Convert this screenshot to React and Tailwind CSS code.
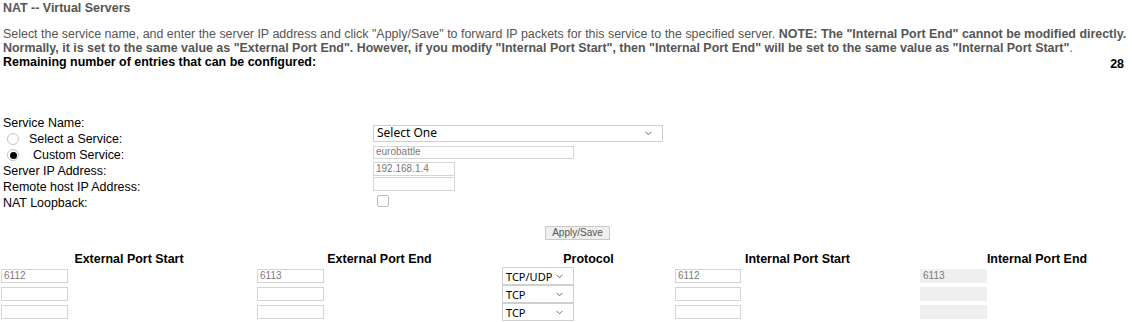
import React from 'react';

const portRows = [
  { extStart: '6112', extEnd: '6113', proto: 'TCP/UDP', intStart: '6112', intEnd: '6113' },
  { extStart: '', extEnd: '', proto: 'TCP', intStart: '', intEnd: '' },
  { extStart: '', extEnd: '', proto: 'TCP', intStart: '', intEnd: '' },
];

function Chevron() {
  return (
    <svg width="7" height="5" viewBox="0 0 7 5" className="shrink-0">
      <polyline points="0.5,0.8 3.5,3.8 6.5,0.8" fill="none" stroke="#6b6b6b" strokeWidth="1" />
    </svg>
  );
}

function FakeSelect({ value, className }) {
  return (
    <div className={`flex items-center justify-between border border-[#cfcfcf] bg-white pl-[3px] pr-[10px] font-['Noto_Sans',sans-serif] leading-none text-black ${className}`}>
      <span>{value}</span>
      <Chevron />
    </div>
  );
}

function TextBox({ value, className, disabled }) {
  return (
    <div
      className={`flex items-center px-[2px] text-[10px] leading-none text-[#7a7a7a] ${
        disabled ? 'bg-[#efefef] border border-[#efefef]' : 'bg-white border border-[#d4d4d4]'
      } ${className}`}
    >
      {value}
    </div>
  );
}

function Radio({ checked }) {
  return (
    <span className="flex h-[12px] w-[12px] items-center justify-center rounded-full border border-[#c4c4c4] bg-white">
      {checked && <span className="h-[7px] w-[7px] rounded-full bg-black" />}
    </span>
  );
}

export default function App() {
  return (
    <div className="w-full h-[322px] overflow-hidden bg-white font-['Liberation_Sans',Arial,sans-serif] text-[12.45px] leading-[14px]">
      <div className="pl-[3px] pt-[1px]">
        {/* タイトル */}
        <div className="font-bold text-[#555]">NAT -- Virtual Servers</div>

        {/* 説明 */}
        <div className="mt-[12px] text-[#555] whitespace-nowrap">
          Select the service name, and enter the server IP address and click "Apply/Save" to forward IP packets for this service to the specified server.{' '}
          <b>NOTE: The "Internal Port End" cannot be modified directly.</b>
          <br />
          <b>
            Normally, it is set to the same value as "External Port End". However, if you modify "Internal Port Start", then "Internal Port End" will be set to the same value as "Internal Port Start"
          </b>
          .
        </div>
        <div className="flex justify-between pr-[8px] font-bold text-black">
          <span>Remaining number of entries that can be configured:</span>
          <span className="pt-[2px]">28</span>
        </div>

        {/* フォーム */}
        <div className="mt-[44px] text-black">
          <div className="flex h-4 items-center">Service Name:</div>
          <div className="flex h-4 items-center">
            <div className="flex w-[370px] items-center">
              <span className="ml-[4px]"><Radio /></span>
              <span className="ml-[10px]">Select a Service:</span>
            </div>
            <FakeSelect value="Select One" className="h-[17px] w-[290px] -mt-[12px] text-[12px]" />
          </div>
          <div className="flex h-4 items-center">
            <div className="flex w-[370px] items-center">
              <span className="ml-[4px]"><Radio checked /></span>
              <span className="ml-[14px]">Custom Service:</span>
            </div>
            <TextBox value="eurobattle" className="h-[13px] w-[201px] -mt-[6px]" />
          </div>
          <div className="flex h-4 items-center">
            <div className="w-[370px]">Server IP Address:</div>
            <TextBox value="192.168.1.4" className="h-[14px] w-[82px] -mt-[5px]" />
          </div>
          <div className="flex h-4 items-center">
            <div className="w-[370px]">Remote host IP Address:</div>
            <TextBox value="" className="h-[14px] w-[82px] -mt-[6px]" />
          </div>
          <div className="flex h-4 items-center">
            <div className="w-[370px]">NAT Loopback:</div>
            <span className="ml-[4px] -mt-[4px] h-[12px] w-[12px] rounded-[2px] border border-[#bdbdbd] bg-white" />
          </div>
        </div>

        <button className="ml-[542px] mt-[15px] flex h-[14px] w-[65px] items-center justify-center border border-[#c9c9c9] bg-[#efefef] text-[10px] leading-none text-[#555]">
          Apply/Save
        </button>
      </div>

      {/* ポート表 */}
      <div className="ml-[1px] mt-[12px] w-[1153px]">
        <div className="grid h-[15px] grid-cols-[256px_245px_173px_245px_234px] font-bold text-black">
          <div className="text-center">External Port Start</div>
          <div className="text-center">External Port End</div>
          <div className="text-center">Protocol</div>
          <div className="text-center">Internal Port Start</div>
          <div className="text-center">Internal Port End</div>
        </div>
        {portRows.map((r, i) => (
          <div key={i} className="grid h-[18px] grid-cols-[256px_245px_173px_245px_234px] items-center">
            <TextBox value={r.extStart} className="h-[14px] w-[67px]" />
            <TextBox value={r.extEnd} className="h-[14px] w-[67px]" />
            <FakeSelect value={r.proto} className="h-[18px] w-[72px] text-[11px]" />
            <TextBox value={r.intStart} className="h-[14px] w-[66px]" />
            <TextBox value={r.intEnd} className="h-[14px] w-[67px]" disabled />
          </div>
        ))}
      </div>
    </div>
  );
}
